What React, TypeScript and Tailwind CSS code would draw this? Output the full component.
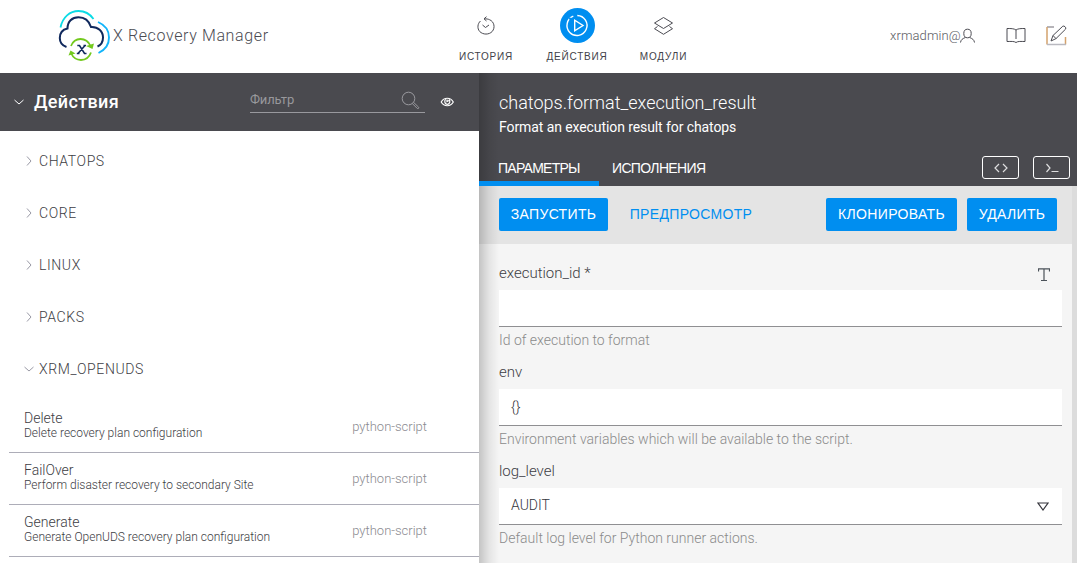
import React from "react";

const packs = ["CHATOPS", "CORE", "LINUX", "PACKS", "XRM_OPENUDS"];

const actions = [
  { name: "Delete", description: "Delete recovery plan configuration" },
  { name: "FailOver", description: "Perform disaster recovery to secondary Site" },
  { name: "Generate", description: "Generate OpenUDS recovery plan configuration" },
];

function Logo() {
  return (
    <svg className="h-[54px] w-[54px] shrink-0" viewBox="0 0 54 54" fill="none">
      <path d="M2.500 18.500C4.500 8 12 2 20.500 2C27 2 32 5 35.500 10" stroke="#0bdbe5" strokeWidth="1.800" />
      <path d="M40 13C47 16 51 22 51 28.500C51 35.500 47 41 40.500 44" stroke="#12b4fa" strokeWidth="1.900" />
      <path d="M8.500 38C4 36.500 1.800 33 1.800 29C1.800 24 5 20.500 9.500 19.500C9.500 12.500 14 8.300 20.500 8.300C27 8.300 31 12 33 18C40 17.500 45 22.500 45 28.500C45 32.500 43 36 39.500 37.500" stroke="#10295d" strokeWidth="2" />
      <path d="M13 37C15 32 18.500 30 22.500 30C27 30 30.500 32.500 32.500 37" stroke="#73c91d" strokeWidth="1.800" />
      <path d="M28 37L36 34.500L34.500 40Z" fill="#73c91d" />
      <path d="M33 43.500C31 49 27.500 51 23 51C18.500 51 15 48.500 13 44" stroke="#73c91d" strokeWidth="1.800" />
      <path d="M10.500 46.500L12.500 41.500L17.500 44.500Z" fill="#73c91d" />
      <path d="M19.300 36.500H21.500L26.500 44.500H28.500M27 36.500L20 44.500M18.800 44.500H21.500M25.500 36.500H28" stroke="#10295d" strokeWidth="1.600" />
    </svg>
  );
}

function HistoryIcon() {
  return (
    <svg className="size-5" viewBox="0 0 20 20" fill="none" stroke="#4b4b52" strokeWidth="1">
      <path d="M4.500 5C1.500 7.600 1 12.500 3.700 15.500C7 18.900 13 18.900 16.200 15.500C19.500 11.700 18.200 5.500 13.500 3.700C12 3 10.500 2.800 8 2.800" />
      <path d="M10.500 .7L8 2.800L10.500 5M6.500 9L9.500 11.500L13 9" />
    </svg>
  );
}

function PlayIcon() {
  return (
    <svg className="size-[35px]" viewBox="0 0 35 35" fill="none">
      <circle cx="17.500" cy="17.500" r="17.500" fill="#008ef0" />
      <path d="M13.300 8.200A10 10 0 1 0 17.300 7.500" stroke="white" strokeWidth="1.400" />
      <path d="M9.500 11.500L10.800 9.800" stroke="#008ef0" strokeWidth="2.200" />
      <path d="M14.700 12.200V22.800L23 17.500Z" stroke="white" strokeWidth="1.400" />
    </svg>
  );
}

function LayersIcon() {
  return (
    <svg className="size-5" viewBox="0 0 20 20" fill="none" stroke="#4b4b52" strokeWidth="1">
      <path d="M9.500 1.500L18.500 7L9.500 12.500L.5 7Z" />
      <path d="M3.500 10.500L.5 12.700L9.500 18.300L18.500 12.700L15.500 10.500" />
    </svg>
  );
}

function Chevron({ open, className }: { open: boolean; className: string }) {
  return (
    <svg className={className} viewBox="0 0 10 10" fill="none" stroke="currentColor" strokeWidth="1">
      <path d={open ? "M0.500 3L5 7L9.500 3" : "M3 0.500L7 5L3 9.500"} />
    </svg>
  );
}

function NavItem({ label, className, children }: { label: string; className: string; children: React.ReactNode }) {
  return (
    <a className={`flex flex-col items-center ${className}`}>
      <span className="flex h-[35px] items-center">{children}</span>
      <span className="mt-2 font-['Liberation_Sans',sans-serif] text-[10px] leading-3 tracking-[0.8px] text-[#424249]">{label}</span>
    </a>
  );
}

function Header() {
  return (
    <header className="flex h-[73px] shrink-0 bg-white">
      <div className="flex w-[440px] items-start pt-[9px] pl-[58px]">
        <Logo />
        <span className="mt-[17px] ml-px text-[16px] leading-5 tracking-[0.62px] whitespace-nowrap text-[#4b4b52]">X Recovery Manager</span>
      </div>
      <nav className="flex flex-1 pt-2">
        <NavItem label="ИСТОРИЯ" className="w-[92px]"><HistoryIcon /></NavItem>
        <NavItem label="ДЕЙСТВИЯ" className="w-[90px]"><PlayIcon /></NavItem>
        <NavItem label="МОДУЛИ" className="w-[83px]"><LayersIcon /></NavItem>
      </nav>
      <div className="flex w-[187px] pt-[25px] text-[#5b5b62]">
        <span className="w-[70px] text-[13px] leading-[22px] tracking-[0.1px]">xrmadmin@</span>
        <svg className="mt-[3px] h-4 w-4" viewBox="0 0 16 16" fill="none" stroke="#4b4b52">
          <ellipse cx="7.500" cy="5.500" rx="3.700" ry="4.300" />
          <path d="M.5 14.500C1 11.500 2.500 10.800 5.300 9.500M9.700 9.500C12.500 10.800 14 11.500 14.500 14.500" />
        </svg>
        <svg className="mt-[1px] ml-[30px] h-[18px] w-5" viewBox="0 0 20 18" fill="none" stroke="#4b4b52">
          <path d="M10 4C8 2.500 5 2.500 1 2.500V15.500C5 15.500 8 15 10 16.500C12 15 15 15.500 19 15.500V2.500C15 2.500 12 2.500 10 4ZM10 4V13" />
        </svg>
        <svg className="ml-5 h-[22px] w-[22px]" viewBox="0 0 22 22" fill="none" stroke="#4b4b52">
          <path d="M8 2H1" stroke="#85838b" strokeWidth="1.200" />
          <path d="M1 2V19.500M19.500 12V19.500" stroke="#d4a26d" strokeWidth="1.500" />
          <path d="M1 19.500H20" stroke="#b9b9c0" strokeWidth="1.500" />
          <path d="M5 16L7 10.500L16.800 1.200C18 .3 20.500 2.500 19.700 4L10 13.600ZM7 10.500L10 13.600" />
        </svg>
      </div>
    </header>
  );
}

function Sidebar() {
  return (
    <aside className="w-[479px] shrink-0 overflow-hidden bg-white">
      <div className="flex h-[58px] items-center bg-[#4a4a4f] text-white">
        <Chevron open className="ml-[14px] size-[10px]" />
        <h1 className="ml-[10px] w-[216px] text-[18px] leading-6 font-medium tracking-[0.35px]">Действия</h1>
        <div className="-mt-[5px] flex h-[27px] w-[175px] items-center justify-between border-b border-[#99999e] pt-px pr-[5px]">
          <span className="text-[13px] font-normal tracking-[-0.2px] text-[#98989c]">Фильтр</span>
          <svg className="mt-[2px] size-[19px]" viewBox="0 0 19 19" fill="none" stroke="#99999e">
            <circle cx="7.500" cy="7.500" r="6.300" />
            <path d="M11.300 12.500L16.300 17.500C17.200 18 18.300 17 17.600 16.200L12.500 11.300" />
          </svg>
        </div>
        <svg className="ml-[15px] h-3 w-[15px]" viewBox="0 0 15 12" fill="none" stroke="white" strokeWidth="1.200">
          <path d="M1.200 6C4 1 10.500 1 13.300 6C10.500 11 4 11 1.200 6Z" />
          <path d="M5.700 3.300C3.800 5 5 8.300 7.300 8.300C9.600 8.300 10.800 5 9 3.300M7 3.500V5.500L9 4.500" />
        </svg>
      </div>
      <ul className="pt-1 text-[#3d3d44]">
        {packs.map((pack, index) => (
          <li key={pack} className="flex h-[52px] items-center pl-6">
            <Chevron open={index === packs.length - 1} className="size-[10px] text-[#9999a5]" />
            <span className="ml-[5px] text-[14px] leading-5 tracking-[0.6px]">{pack}</span>
          </li>
        ))}
      </ul>
      <ul className="mt-[6px] pl-[9px] text-[#3d3d44]">
        {actions.map((action) => (
          <li key={action.name} className="flex h-[52px] items-center justify-between border-b border-[#adadb8] pr-[52px] pl-[15px]">
            <div className="pb-[3px]">
              <p className="text-[14px] leading-[16px]">{action.name}</p>
              <p className="text-[12px] leading-[14px]">{action.description}</p>
            </div>
            <span className="text-[13px] leading-5 text-[#8a8a8f]">python-script</span>
          </li>
        ))}
      </ul>
    </aside>
  );
}

function Field({ label, help, children }: { label: string; help: string; children?: React.ReactNode }) {
  return (
    <div className="h-[99px]">
      <div className="flex h-[27px] items-start justify-between text-[15px] leading-5 text-[#3d3d44]">
        <span>{label}</span>
        {label === "execution_id *" && (
          <svg className="mt-[5px] mr-3 h-[14px] w-3" viewBox="0 0 12 14" fill="none" stroke="#4b5259">
            <path d="M.5 3.500V.8H11.500V3.500M6 1V12.500M3 12.500H9" strokeWidth="1.200" />
          </svg>
        )}
      </div>
      <div className="flex h-[37px] items-center justify-between border-b border-[#8f8f92] bg-white pr-[13px] pl-3 text-[14px] text-[#35353c]">{children}</div>
      <p className="mt-[3px] text-[14px] leading-5 text-[#8b8b8b]">{help}</p>
    </div>
  );
}

function Details() {
  return (
    <main className="relative flex min-w-0 flex-1 flex-col bg-[#f5f5f5]">
      <div className="h-[113px] shrink-0 bg-[#4a4a4f] text-white">
        <h2 className="pt-[19px] pl-5 text-[18px] leading-[22px] font-light">chatops.format_execution_result</h2>
        <p className="pt-[3px] pl-5 text-[14px] leading-5 font-normal tracking-[-0.09px]">Format an execution result for chatops</p>
        <div className="mt-[14px] flex h-[35px] font-['Liberation_Sans',sans-serif] text-[14px] font-normal">
          <span className="w-[120px] border-b-[5px] border-[#008ef0] pt-[7px] pl-[19px] leading-5 tracking-[-0.75px]">ПАРАМЕТРЫ</span>
          <span className="pt-[7px] pl-[13px] leading-5 tracking-[-0.65px]">ИСПОЛНЕНИЯ</span>
          <div className="ml-auto flex gap-[14px] pt-[5px] pr-[7px]">
            <span className="flex h-[23px] w-[37px] items-center justify-center rounded-[3px] border border-white">
              <svg className="h-[10px] w-[14px]" viewBox="0 0 14 10" fill="none" stroke="#dededf"><path d="M5 1L1 5L5 9M9 1L13 5L9 9" strokeWidth="1.200" /></svg>
            </span>
            <span className="flex h-[23px] w-[37px] items-center justify-center rounded-[3px] border border-white">
              <svg className="h-[10px] w-[14px]" viewBox="0 0 14 10" fill="none" stroke="#dededf"><path d="M1.500 1L5 5L1.500 9M6.500 8.500H13.500" strokeWidth="1.200" /></svg>
            </span>
          </div>
        </div>
      </div>
      <div className="flex min-h-0 flex-1">
        <div className="flex-1">
          <div className="flex h-[58px] items-center bg-[#e4e4e4] pb-[2px] pl-5 font-['Liberation_Sans',sans-serif] text-[14px] tracking-[0.33px] text-white">
            <button className="h-[33px] w-[109px] rounded-[2px] bg-[#008ef0]">ЗАПУСТИТЬ</button>
            <button className="ml-3 h-[33px] w-[142px] text-[#008ef0]">ПРЕДПРОСМОТР</button>
            <button className="mr-[10px] ml-auto h-[33px] w-[131px] rounded-[2px] bg-[#008ef0]">КЛОНИРОВАТЬ</button>
            <button className="mr-[15px] h-[33px] w-[90px] rounded-[2px] bg-[#008ef0]">УДАЛИТЬ</button>
          </div>
          <div className="pt-[19px] pr-[10px] pl-5">
            <Field label="execution_id *" help="Id of execution to format" />
            <Field label="env" help="Environment variables which will be available to the script."><span>{"{}"}</span></Field>
            <Field label="log_level" help="Default log level for Python runner actions.">
              <span className="pb-[2px]">AUDIT</span>
              <svg className="h-[9px] w-3" viewBox="0 0 12 9" fill="none" stroke="#35353c"><path d="M1 1H11L6 8Z" strokeWidth="1.200" /></svg>
            </Field>
          </div>
        </div>
        <div className="w-[5px] bg-[#dcdcdc]" />
      </div>
      <div className="pointer-events-none absolute inset-y-0 left-0 w-5 bg-linear-to-r from-black/20 via-black/7 to-transparent" />
      <div className="pointer-events-none absolute top-[108px] left-0 h-[5px] w-[120px] bg-[#008ef0]" />
    </main>
  );
}

export default function App() {
  return (
    <div className="flex h-[563px] w-[1077px] flex-col overflow-hidden bg-white font-['Roboto',sans-serif] font-light">
      <Header />
      <div className="flex min-h-0 flex-1">
        <Sidebar />
        <Details />
      </div>
    </div>
  );
}
